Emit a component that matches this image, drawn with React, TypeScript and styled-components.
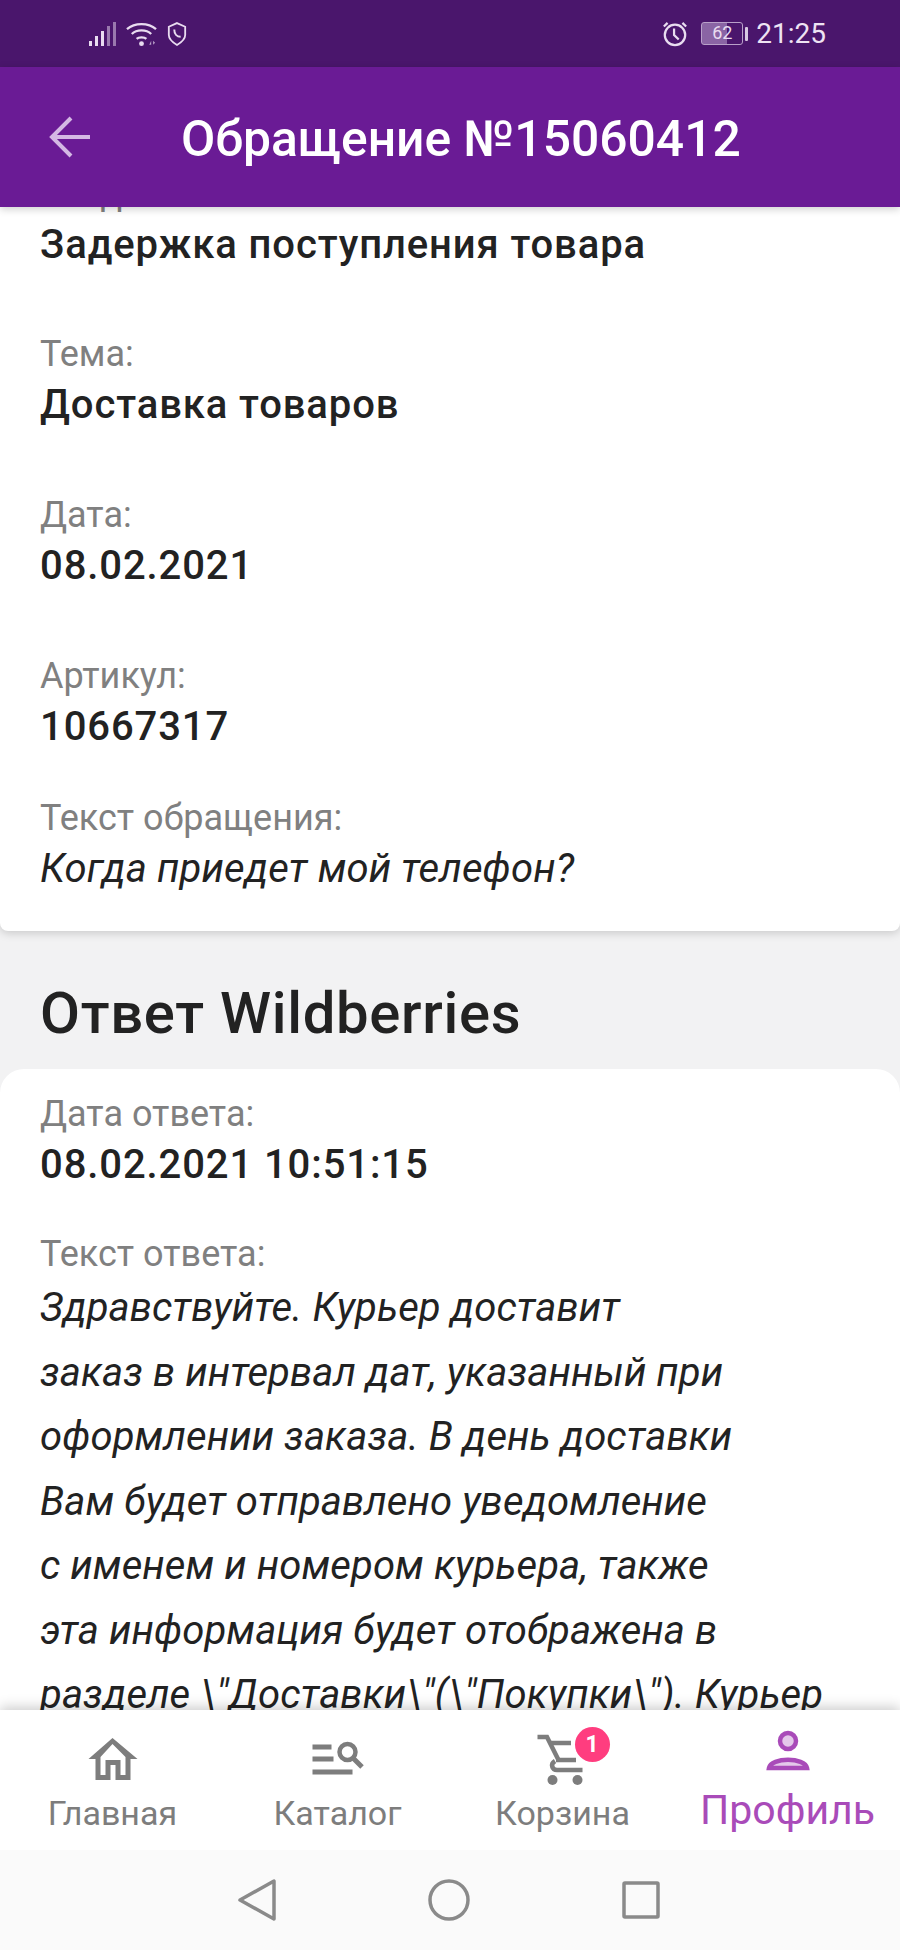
import React from 'react';
import styled, { createGlobalStyle } from 'styled-components';

const GlobalStyle = createGlobalStyle`
  html, body {
    margin: 0;
    padding: 0;
    background: #f2f2f3;
    font-family: Roboto, "Noto Sans", sans-serif;
  }
`

const Screen = styled.div`
  width: 900px;
  height: 1950px;
  display: flex;
  flex-direction: column;
  overflow: hidden;
  background: #f2f2f3;
`
const StatusBar = styled.div`
  height: 67px;
  flex: none;
  display: flex;
  align-items: center;
  justify-content: space-between;
  padding: 0 74px 0 88px;
  background: #4a166c;
  color: #e9dcf0;
`
const StatusGroup = styled.div`
  display: flex;
  align-items: center;
  gap: 10px;
`
const Clock = styled.span`
  font-size: 28px;
  line-height: 34px;
  margin-left: -2px;
  color: #eee3f3;
`
const Battery = styled.div`
  width: 42px;
  height: 23px;
  margin-left: 3px;
  border: 1.5px solid #b9a0c9;
  border-radius: 3px;
  box-sizing: border-box;
  background: linear-gradient(to right, #8a64a4 62%, transparent 62%);
  font-size: 18px;
  line-height: 20px;
  text-align: center;
  color: #e9dcf0;
`
const Header = styled.header`
  height: 140px;
  flex: none;
  display: flex;
  align-items: center;
  padding-left: 49px;
  background: #6a1b95;
  box-shadow: 0 2px 8px rgba(0, 0, 0, 0.2);
  position: relative;
  z-index: 2;
`
const HeaderTitle = styled.h1`
  margin: 4px 0 0 90px;
  font-size: 49.8px;
  font-weight: 500;
  color: #fff;
`
const Content = styled.main`
  flex: 1;
  min-height: 0;
  overflow: hidden;
`
const TopCard = styled.section`
  background: #fff;
  padding: 0 40px;
  height: 759px;
  margin-top: -35px;
  box-shadow: 0 2px 10px rgba(0, 0, 0, 0.18);
  border-radius: 0 0 8px 8px;
`
const Field = styled.div<{ $gap?: number }>`
  margin-top: ${(p) => p.$gap ?? 0}px;
`
const Label = styled.div`
  font-size: 36px;
  line-height: 44px;
  color: #808080;
`
const Value = styled.div`
  font-size: 40px;
  line-height: 58px;
  font-weight: 500;
  letter-spacing: 0.9px;
  color: #222;
`
const Question = styled.div`
  font-size: 40px;
  line-height: 58px;
  font-style: italic;
  letter-spacing: 0.15px;
  color: #222;
`
const SectionTitle = styled.h2`
  margin: 0;
  padding: 47px 40px 0;
  height: 138px;
  box-sizing: border-box;
  font-size: 58px;
  line-height: 70px;
  font-weight: 500;
  letter-spacing: 0.7px;
  color: #222;
`
const AnswerCard = styled.section`
  background: #fff;
  border-radius: 24px 24px 0 0;
  padding: 23px 40px 0;
  height: 700px;
`
const AnswerText = styled.div`
  font-size: 40px;
  line-height: 64.5px;
  font-style: italic;
  letter-spacing: 0.1px;
  color: #222;
  white-space: nowrap;
`
const TabBar = styled.nav`
  height: 140px;
  flex: none;
  display: grid;
  grid-template-columns: repeat(4, 1fr);
  background: #fff;
  box-shadow: 0 -3px 12px rgba(0, 0, 0, 0.2);
  position: relative;
  z-index: 2;
`
const Tab = styled.div<{ $active?: boolean }>`
  display: flex;
  flex-direction: column;
  align-items: center;
  padding-top: 20px;
  font-size: ${(p) => (p.$active ? 41 : 34)}px;
  line-height: 40px;
  color: ${(p) => (p.$active ? '#a94bb9' : '#7d7d7d')};
`
const TabIcon = styled.div<{ $active?: boolean }>`
  width: 60px;
  height: 60px;
  margin-bottom: ${(p) => (p.$active ? 0 : 3)}px;
  position: relative;
`
const Badge = styled.span`
  position: absolute;
  top: -3px;
  left: 42px;
  width: 35px;
  height: 35px;
  border-radius: 50%;
  background: #ff3d7f;
  color: #fff;
  font-size: 23px;
  font-weight: 700;
  line-height: 35px;
  text-align: center;
`
const NavBar = styled.div`
  height: 100px;
  flex: none;
  display: flex;
  align-items: center;
  padding-left: 238px;
  gap: 152px;
  background: #fafafa;
  position: relative;
  z-index: 3;
`

const answerLines = [
  'Здравствуйте. Курьер доставит',
  'заказ в интервал дат, указанный при',
  'оформлении заказа. В день доставки',
  'Вам будет отправлено уведомление',
  'с именем и номером курьера, также',
  'эта информация будет отображена в',
  'разделе \\"Доставки\\"(\\"Покупки\\"). Курьер',
]

function App() {
  return (
    <Screen>
      <GlobalStyle />
      <StatusBar>
        <StatusGroup>
          <svg width="28" height="26" viewBox="0 0 28 26" fill="#e9dcf0">
            <rect x="1" y="20" width="3" height="5" />
            <rect x="7" y="15" width="3" height="10" />
            <rect x="13" y="10" width="3" height="15" />
            <rect x="19" y="5" width="3" height="20" opacity="0.5" />
            <rect x="25" y="1" width="3" height="24" opacity="0.5" />
          </svg>
          <svg width="31" height="26" viewBox="0 0 32 26" fill="none" stroke="#e9dcf0" strokeWidth="2.4">
            <path d="M1 8C9 1 23 1 31 8" />
            <path d="M6 13C11 8 21 8 26 13" />
            <path d="M11 18C13 16 19 16 21 18" />
            <circle cx="16" cy="23" r="2.5" fill="#e9dcf0" stroke="none" />
            <path d="M24 24l2-4v4zM28 20l2 2-2 2z" fill="#b9a0c9" stroke="none" />
          </svg>
          <svg width="20" height="26" viewBox="0 0 22 26" fill="none" stroke="#e9dcf0" strokeWidth="2">
            <path d="M11 1l9 4v9c0 5-4 8-9 11-5-3-9-6-9-11V5z" />
            <path d="M8 8c0 5 3 8 7 8" strokeWidth="2.2" />
          </svg>
        </StatusGroup>
        <StatusGroup>
          <svg width="26" height="28" viewBox="0 0 28 28" fill="none" stroke="#e9dcf0" strokeWidth="2.4">
            <circle cx="14" cy="15" r="11" />
            <path d="M13 8v7l5 5" />
            <path d="M2 6l4-4M26 6l-4-4" />
          </svg>
          <Battery>62</Battery>
          <svg width="3" height="14" viewBox="0 0 3 14" fill="#d8c8e2" style={{ marginLeft: -8 }}>
            <rect width="3" height="14" rx="1" />
          </svg>
          <Clock>21:25</Clock>
        </StatusGroup>
      </StatusBar>

      <Header>
        <svg width="42" height="42" viewBox="0 0 42 42" fill="none" stroke="#d4b8e4" strokeWidth="4">
          <path d="M41 21H4" />
          <path d="M22 2L3 21l19 19" />
        </svg>
        <HeaderTitle>Обращение №15060412</HeaderTitle>
      </Header>

      <Content>
        <TopCard>
          <Field>
            <Label>Раздел:</Label>
            <Value>Задержка поступления товара</Value>
          </Field>
          <Field $gap={58}>
            <Label>Тема:</Label>
            <Value>Доставка товаров</Value>
          </Field>
          <Field $gap={59}>
            <Label>Дата:</Label>
            <Value>08.02.2021</Value>
          </Field>
          <Field $gap={59}>
            <Label>Артикул:</Label>
            <Value>10667317</Value>
          </Field>
          <Field $gap={40}>
            <Label>Текст обращения:</Label>
            <Question>Когда приедет мой телефон?</Question>
          </Field>
        </TopCard>
        <SectionTitle>Ответ Wildberries</SectionTitle>
        <AnswerCard>
          <Field>
            <Label>Дата ответа:</Label>
            <Value>08.02.2021 10:51:15</Value>
          </Field>
          <Field $gap={38}>
            <Label>Текст ответа:</Label>
            <AnswerText>
              {answerLines.map((line) => (
                <div key={line}>{line}</div>
              ))}
            </AnswerText>
          </Field>
        </AnswerCard>
      </Content>

      <TabBar>
        <Tab>
          <TabIcon>
            <svg width="60" height="60" viewBox="0 0 60 60" fill="#7d7d7d">
              <path
                fillRule="evenodd"
                d="M29.5 8L5.5 29h7v21h15V35h5v15h15V29h7zM29.5 14L42.5 27v18h-5V30h-15v15h-5V27z"
              />
            </svg>
          </TabIcon>
          Главная
        </Tab>
        <Tab>
          <TabIcon>
            <svg width="60" height="60" viewBox="0 0 60 60" fill="none" stroke="#7d7d7d">
              <path d="M4.5 17h19M4.5 29h21M4.5 42h40" strokeWidth="5" />
              <circle cx="39.5" cy="22" r="8" strokeWidth="4.5" />
              <path d="M45 28l9 9" strokeWidth="5" />
            </svg>
          </TabIcon>
          Каталог
        </Tab>
        <Tab>
          <TabIcon>
            <svg width="60" height="60" viewBox="0 0 60 60" fill="none" stroke="#7d7d7d" strokeWidth="4.5">
              <path d="M4.5 7H14l12 24" />
              <path d="M17 13h21M23 30h20" />
              <path d="M49.5 40H24c-5 0-7-6-2-9" />
              <circle cx="19.5" cy="50" r="5" fill="#7d7d7d" stroke="none" />
              <circle cx="44.5" cy="50" r="5" fill="#7d7d7d" stroke="none" />
            </svg>
            <Badge>1</Badge>
          </TabIcon>
          Корзина
        </Tab>
        <Tab $active>
          <TabIcon $active>
            <svg width="60" height="60" viewBox="0 0 60 60">
              <circle cx="30" cy="11" r="8" fill="#e4c8ea" stroke="#a94bb9" strokeWidth="4.5" />
              <path d="M11 38c2-11 36-11 38 0z" fill="#e4c8ea" stroke="#a94bb9" strokeWidth="4.5" />
            </svg>
          </TabIcon>
          Профиль
        </Tab>
      </TabBar>

      <NavBar>
        <svg width="38" height="42" viewBox="0 0 38 42" fill="none" stroke="#8a8a8a" strokeWidth="3.5" strokeLinejoin="round">
          <path d="M36 2v38L2 21z" />
        </svg>
        <svg width="42" height="42" viewBox="0 0 42 42" fill="none" stroke="#8a8a8a" strokeWidth="3.5">
          <circle cx="21" cy="21" r="19" />
        </svg>
        <svg width="38" height="38" viewBox="0 0 38 38" fill="none" stroke="#8a8a8a" strokeWidth="3.5" strokeLinejoin="round">
          <rect x="2" y="2" width="34" height="34" rx="1" />
        </svg>
      </NavBar>
    </Screen>
  );
}

export default App;
